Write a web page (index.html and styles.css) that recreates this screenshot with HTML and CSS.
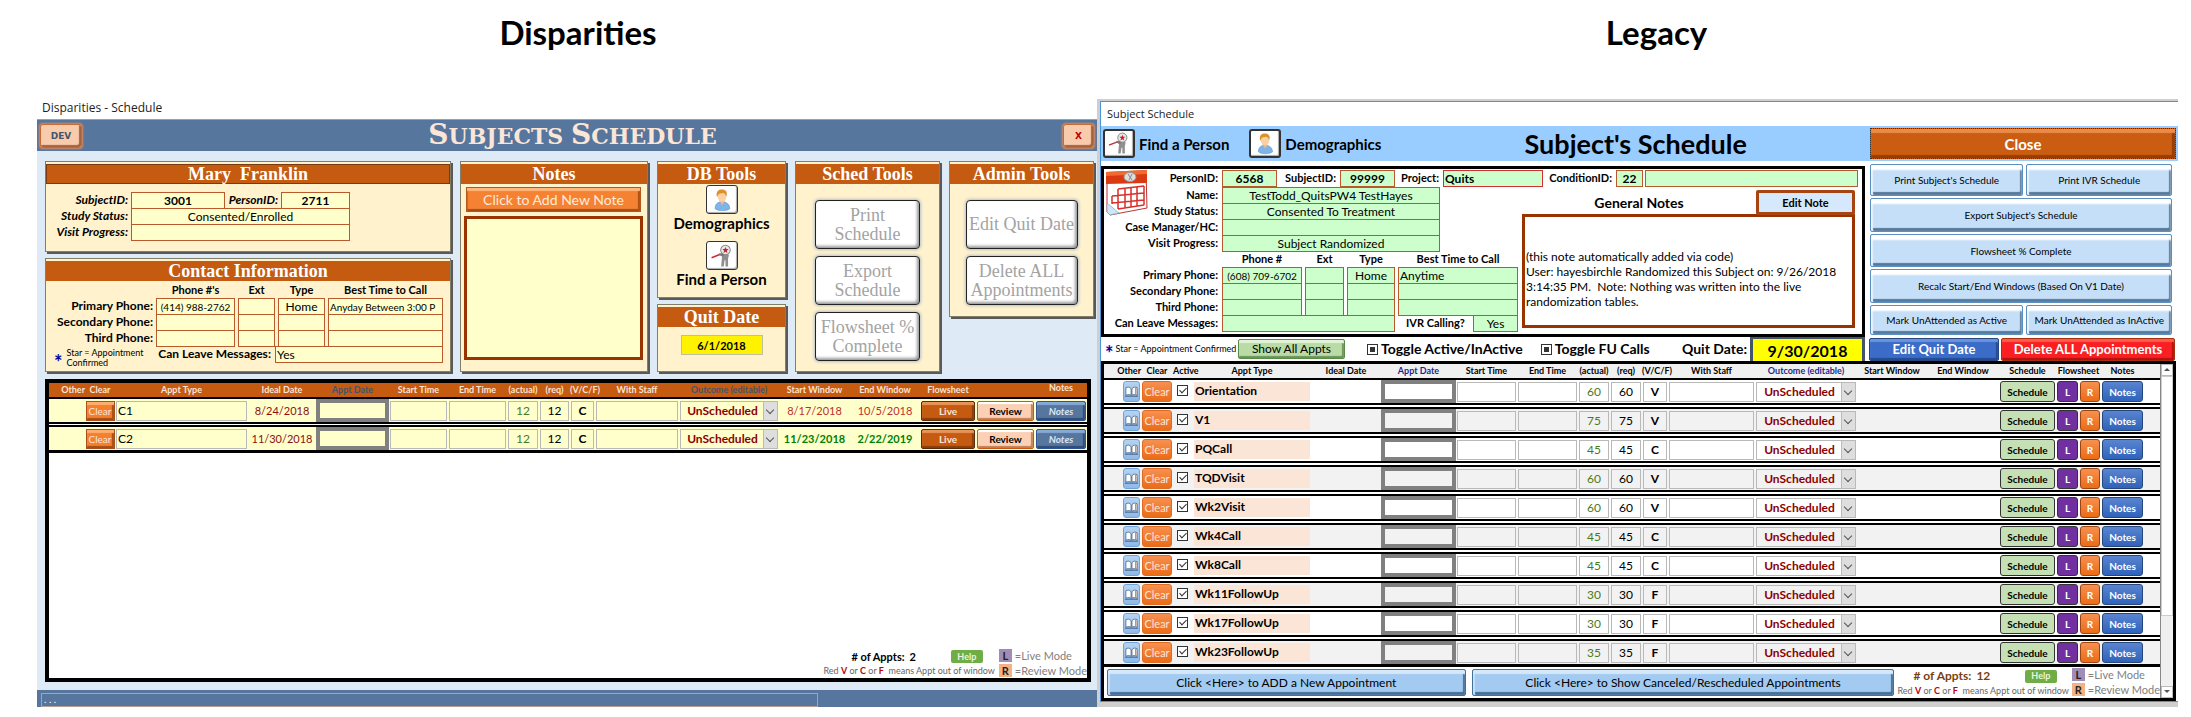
FILE: index.html
```html
<!DOCTYPE html>
<html lang="en">
<head>
<meta charset="utf-8">
<title>Subject schedule: Disparities and Legacy</title>
<link rel="stylesheet" href="styles.css">
</head>
<body>
<svg class="defs" aria-hidden="true">
  <symbol id="person" viewBox="0 0 30 30">
    <path d="M7 25c0-5 3-8 8-8s9 3 9 8c-3 3-14 3-17 0z" fill="#7db4ea" stroke="#4a86c5" stroke-width=".6"/>
    <path d="M12 16l3 5 3-4v-3h-6z" fill="#f0b98a"/>
    <ellipse cx="15" cy="11" rx="5" ry="6" fill="#fbd0a6"/>
    <path d="M9 11c-1-6 2-8 6-8s7 3 5 8c-1-2-2-4-4-4-3 1-5 0-6 4z" fill="#d8942b"/>
  </symbol>
  <symbol id="finder" viewBox="0 0 30 30">
    <path d="M12 13l7-3 4 4-1 4v9h-3v-7h-1l-1 7h-3l1-11z" fill="#8f8f8f"/>
    <circle cx="19" cy="8" r="5.500" fill="#e8e8e8" stroke="#888" stroke-width="1.200"/>
    <path d="M19 4.500l1 2.500h2.500l-2 1.800.8 2.700-2.300-1.500-2.300 1.500.8-2.700-2-1.800H18z" fill="#c8202c"/>
    <path d="M3 17l10-4" stroke="#c0303a" stroke-width="1.800"/>
    <path d="M12 13l5 1" stroke="#777" stroke-width="2.500"/>
  </symbol>
  <symbol id="book" viewBox="0 0 16 16">
    <path d="M2 4c2-1 4-1 5.500 1v7C6 11 4 11 2 12zM14 4c-2-1-4-1-5.500 1v7c1.500-1 3.500-1 5.500 0z" fill="#fff" stroke="#3f5f85" stroke-width=".8"/>
    <path d="M12.500 4v7" stroke="#d07a3a" stroke-width="1.200"/><path d="M1 13h14" stroke="#3f5f85"/>
  </symbol>
  <symbol id="calendar" viewBox="0 0 42 46">
    <path d="M1 5L40 1l1 37L4 45l-3-3z" fill="#fff" stroke="#b33" stroke-width="1"/>
    <path d="M0 2L41 0v13L0 14z" fill="#d93a12"/>
    <path d="M0 2L41 0v4L0 6z" fill="#f06a32"/>
    <ellipse cx="24" cy="7" rx="6" ry="4.500" fill="#ddd" stroke="#999"/><path d="M22 4l4 6M26 4l-3 6" stroke="#888"/>
    <path d="M12 19l26-3M6 26l32-3M6 33l32-3M12 39l26-4M6 26v8M12 19v20M19 18v20M25 17v20M31 17v19M38 16v19" fill="none" stroke="#d8302a" stroke-width="1.500"/>
    <path d="M1 33l12 10-9 2-3-3z" fill="#cfe6f7" stroke="#7ab" stroke-width=".7"/>
  </symbol>
</svg>

<main class="page">
  <h1 class="heading">Disparities</h1>
  <h1 class="heading second-heading">Legacy</h1>

  <section class="disp">
    <div class="disp-caption">Disparities - Schedule</div>
    <header class="disp-bar">
      <button class="dev">DEV</button>
      <h2><span>Subjects</span> <span>Schedule</span></h2>
      <button class="dev exit">X</button>
    </header>

    <div class="disp-body">
      <div class="cards">
        <div class="stack">
          <section class="card">
            <h3 class="outlined">Mary&nbsp; Franklin</h3>
            <div class="subject-grid">
              <label for="d-subj">SubjectID:</label><input id="d-subj" class="strong" value="3001">
              <label for="d-pers">PersonID:</label><input id="d-pers" class="strong" value="2711">
              <label for="d-stat">Study Status:</label><input id="d-stat" class="wide" value="Consented/Enrolled">
              <label for="d-prog">Visit Progress:</label><input id="d-prog" class="wide">
            </div>
          </section>
          <section class="card grow">
            <h3>Contact Information</h3>
            <div class="phone-grid contact">
              <b></b><b>Phone #'s</b><b>Ext</b><b>Type</b><b>Best Time to Call</b>
              <label for="d-p1">Primary Phone:</label><input id="d-p1" class="phone" value="(414) 988-2762"><input aria-label="Ext 1"><input aria-label="Type 1" value="Home"><input aria-label="Best time 1" class="left best" value="Anyday Between 3:00 P">
              <label for="d-p2">Secondary Phone:</label><input id="d-p2"><input aria-label="Ext 2"><input aria-label="Type 2"><input aria-label="Best time 2">
              <label for="d-p3">Third Phone:</label><input id="d-p3"><input aria-label="Ext 3"><input aria-label="Type 3"><input aria-label="Best time 3">
              <p class="star-note"><span class="star">*</span><span>Star = Appointment Confirmed</span></p>
              <label class="messages" for="d-msg">Can Leave Messages:</label><input id="d-msg" class="left span-two" value="Yes">
            </div>
          </section>
        </div>

        <section class="card notes-card">
          <h3>Notes</h3>
          <button class="add-note">Click to Add New Note</button>
          <textarea class="note-box" aria-label="Notes"></textarea>
        </section>

        <div class="stack">
          <section class="card tools">
            <h3>DB Tools</h3>
            <button class="icon-btn" aria-label="Demographics"><svg><use href="#person"/></svg></button>
            <span class="tool-name">Demographics</span>
            <button class="icon-btn" aria-label="Find a Person"><svg><use href="#finder"/></svg></button>
            <span class="tool-name">Find a Person</span>
          </section>
          <section class="card grow quit-card">
            <h3>Quit Date</h3>
            <input aria-label="Quit Date" value="6/1/2018">
          </section>
        </div>

        <section class="card soft-tools">
          <h3>Sched Tools</h3>
          <button>Print Schedule</button>
          <button>Export Schedule</button>
          <button>Flowsheet % Complete</button>
        </section>

        <section class="card soft-tools admin">
          <h3>Admin Tools</h3>
          <button>Edit Quit Date</button>
          <button>Delete ALL Appointments</button>
        </section>
      </div>

      <div class="disp-list">
        <table class="appts warm">
          <colgroup>
            <col class="w36"><col class="w30"><col><col class="w68"><col class="w73"><col class="w59"><col class="w59"><col class="w32"><col class="w31"><col class="w25"><col class="w84"><col class="w100"><col class="w71"><col class="w70"><col class="w56"><col class="w59"><col class="w52">
          </colgroup>
          <thead><tr>
            <th class="end">Other</th><th>Clear</th><th>Appt Type</th><th>Ideal Date</th><th class="edit">Appt Date</th><th>Start Time</th><th>End Time</th><th>(actual)</th><th>(req)</th><th>(V/C/F)</th><th>With Staff</th><th class="edit">Outcome (editable)</th><th>Start Window</th><th>End Window</th><th>Flowsheet</th><th></th><th class="raised">Notes</th>
          </tr></thead>
          <tbody id="disp-rows"></tbody>
        </table>
        <footer class="disp-foot">
          <div class="counts">
            <p class="count"><span># of Appts:</span> <span>2</span><button class="help">Help</button></p>
            <p class="legend-text">Red <b>V</b> or <b>C</b> or <b>F</b>&nbsp; means Appt out of window</p>
          </div>
          <dl class="modes"><dt class="live">L</dt><dd>=Live Mode</dd><dt class="review">R</dt><dd>=Review Mode</dd></dl>
        </footer>
      </div>
    </div>
    <div class="status"><div class="status-field">. . .</div></div>
  </section>

  <section class="legacy-frame">
    <div class="legacy">
      <div class="legacy-caption">Subject Schedule</div>
      <header class="legacy-bar">
        <button class="icon-btn big" aria-label="Find a Person"><svg><use href="#finder"/></svg></button>
        <span class="bar-name">Find a Person</span>
        <button class="icon-btn big" aria-label="Demographics"><svg><use href="#person"/></svg></button>
        <span class="bar-name">Demographics</span>
        <h2>Subject's Schedule</h2>
        <button class="close">Close</button>
      </header>

      <div class="legacy-top">
        <section class="info">
          <svg class="calendar"><use href="#calendar"/></svg>
          <div class="ids">
            <label class="first" for="l-pers">PersonID:</label><input id="l-pers" class="strong id" value="6568">
            <label class="second" for="l-subj">SubjectID:</label><input id="l-subj" class="strong id" value="99999">
            <label class="third" for="l-proj">Project:</label><input id="l-proj" class="strong left project" value="Quits">
            <label class="fourth" for="l-cond">ConditionID:</label><input id="l-cond" class="strong cond" value="22">
            <input class="cond-name" aria-label="Condition name">
          </div>
          <div class="info-split">
            <div class="phone-grid green">
              <label for="l-name">Name:</label><input id="l-name" class="mid" value="TestTodd_QuitsPW4 TestHayes">
              <label for="l-stat">Study Status:</label><input id="l-stat" class="mid" value="Consented To Treatment">
              <label for="l-case">Case Manager/HC:</label><input id="l-case" class="mid">
              <label for="l-prog">Visit Progress:</label><input id="l-prog" class="mid" value="Subject Randomized">
              <b></b><b>Phone #</b><b>Ext</b><b>Type</b><b>Best Time to Call</b>
              <label for="l-p1">Primary Phone:</label><input id="l-p1" class="phone" value="(608) 709-6702"><input aria-label="Ext 1"><input aria-label="Type 1" value="Home"><input aria-label="Best time 1" class="left" value="Anytime">
              <label for="l-p2">Secondary Phone:</label><input id="l-p2"><input aria-label="Ext 2"><input aria-label="Type 2"><input aria-label="Best time 2">
              <label for="l-p3">Third Phone:</label><input id="l-p3"><input aria-label="Ext 3"><input aria-label="Type 3"><input aria-label="Best time 3">
              <label for="l-msg">Can Leave Messages:</label><input id="l-msg" class="span-three">
              <span class="ivr"><label for="l-ivr">IVR Calling?</label><input id="l-ivr" value="Yes"></span>
            </div>
            <div class="general">
              <div class="general-head"><label for="l-notes">General Notes</label><button class="edit-note">Edit Note</button></div>
              <textarea id="l-notes">(this note automatically added via code)
User: hayesbirchle Randomized this Subject on: 9/26/2018 3:14:35 PM.  Note: Nothing was written into the live randomization tables.</textarea>
            </div>
          </div>
        </section>
        <div class="actions">
          <button>Print Subject's Schedule</button><button>Print IVR Schedule</button>
          <button class="full">Export Subject's Schedule</button>
          <button class="full">Flowsheet % Complete</button>
          <button class="full">Recalc Start/End Windows (Based On V1 Date)</button>
          <button>Mark UnAttended as Active</button><button>Mark UnAttended as InActive</button>
        </div>
      </div>

      <div class="toolbar">
        <p class="star-note"><span class="star">*</span><span>Star = Appointment Confirmed</span></p>
        <button class="show-all">Show All Appts</button>
        <label class="toggle active-toggle"><input type="checkbox" checked>Toggle Active/InActive</label>
        <label class="toggle"><input type="checkbox" checked>Toggle FU Calls</label>
        <label class="quit-label" for="l-quit">Quit Date:</label>
        <input id="l-quit" class="quit" value="9/30/2018">
        <button class="edit-quit">Edit Quit Date</button>
        <button class="delete-all">Delete ALL Appointments</button>
      </div>

      <div class="legacy-list">
        <div class="list-main">
          <table class="appts cool">
            <colgroup>
              <col class="w37"><col class="w32"><col class="w20"><col><col class="w70"><col class="w75"><col class="w61"><col class="w61"><col class="w32"><col class="w32"><col class="w26"><col class="w87"><col class="w102"><col class="w70"><col class="w72"><col class="w57"><col class="w23"><col class="w22"><col class="w43"><col class="w16">
            </colgroup>
            <thead><tr>
              <th class="end">Other</th><th>Clear</th><th class="start">Active</th><th>Appt Type</th><th>Ideal Date</th><th class="edit">Appt Date</th><th>Start Time</th><th>End Time</th><th>(actual)</th><th>(req)</th><th>(V/C/F)</th><th>With Staff</th><th class="edit">Outcome (editable)</th><th>Start Window</th><th>End Window</th><th>Schedule</th><th colspan="2">Flowsheet</th><th>Notes</th><th></th>
            </tr></thead>
            <tbody id="legacy-rows"></tbody>
          </table>
          <footer class="legacy-foot">
            <button class="add">Click &lt;Here&gt; to ADD a New Appointment</button>
            <button class="canceled">Click &lt;Here&gt; to Show Canceled/Rescheduled Appointments</button>
            <div class="counts">
              <p class="count brown"><span># of Appts:</span> <span>12</span><button class="help">Help</button></p>
              <p class="legend-text">Red <b>V</b> or <b>C</b> or <b>F</b>&nbsp; means Appt out of window</p>
            </div>
            <dl class="modes"><dt class="live">L</dt><dd>=Live Mode</dd><dt class="review">R</dt><dd>=Review Mode</dd></dl>
          </footer>
        </div>
        <div class="scroll"><i class="up"></i><span class="thumb"></span><i class="down"></i></div>
      </div>
    </div>
  </section>
</main>
<script src="rows.js"></script>
</body>
</html>
```

FILE: rows.js
```javascript
const box = (label, cls = "", value = "") =>
  `<td><input class="cell ${cls}" aria-label="${label}" value="${value}"></td>`;
const outcome = `<td><span class="pick"><select aria-label="Outcome"><option>UnScheduled</option></select></span></td>`;

const disparities = [
  ["C1", "8/24/2018", "8/17/2018", "10/5/2018", "due"],
  ["C2", "11/30/2018", "11/23/2018", "2/22/2019", "open"],
];
document.getElementById("disp-rows").innerHTML = disparities.map(([type, ideal, from, to, state]) => `<tr>
  <td></td><td><button class="clear">Clear</button></td>${box("Appt type", "left", type)}
  <td class="date ideal">${ideal}</td>${box("Appt date", "appt")}${box("Start time")}${box("End time")}
  ${box("Actual", "actual", 12)}${box("Required", "", 12)}${box("Kind", "strong", "C")}${box("Staff")}${outcome}
  <td class="date ${state}">${from}</td><td class="date ${state}">${to}</td>
  <td><button class="glass live-btn">Live</button></td><td><button class="glass review-btn">Review</button></td>
  <td><button class="glass notes-btn">Notes</button></td></tr>`).join("");

const legacy = [
  ["Orientation", 60, "V"], ["V1", 75, "V"], ["PQCall", 45, "C"], ["TQDVisit", 60, "V"],
  ["Wk2Visit", 60, "V"], ["Wk4Call", 45, "C"], ["Wk8Call", 45, "C"], ["Wk11FollowUp", 30, "F"],
  ["Wk17FollowUp", 30, "F"], ["Wk23FollowUp", 35, "F"],
];
document.getElementById("legacy-rows").innerHTML = legacy.map(([type, mins, kind]) => `<tr>
  <td class="end"><button class="book" aria-label="Other"><svg><use href="#book"/></svg></button></td>
  <td><button class="clear">Clear</button></td>
  <td><input type="checkbox" class="tick" aria-label="Active" checked></td>
  <td class="type"><span>${type}</span></td><td></td>${box("Appt date", "appt")}${box("Start time")}${box("End time")}
  ${box("Actual", "actual", mins)}${box("Required", "", mins)}${box("Kind", "strong", kind)}${box("Staff")}${outcome}
  <td></td><td></td>
  <td><button class="flat sched">Schedule</button></td><td><button class="flat l">L</button></td>
  <td><button class="flat r">R</button></td><td><button class="flat n">Notes</button></td><td></td></tr>`).join("");
```

FILE: styles.css
```css
* { box-sizing: border-box; }
body { margin: 0; background: #fff; color: #000; font: 12px/16px Lato, "Open Sans", sans-serif; }
h1, h2, h3, p, dl, dd { margin: 0; }
button, input, select, textarea { font: inherit; color: inherit; margin: 0; padding: 0; border-radius: 0; }
button { cursor: pointer; white-space: nowrap; }
textarea { resize: none; display: block; }
.defs { position: absolute; width: 0; height: 0; }

.page { display: grid; grid-template-columns: 1060fr 1081fr; padding: 0 13px 0 37px; }
.heading { height: 99px; padding: 12px 0 0 22px; font-size: 33px; line-height: 40px; text-align: center; }
.second-heading { padding-left: 38px; }

/* Disparities window */
.disp { display: flex; flex-direction: column; background: #deebf7; }
.disp-caption { background: #fff; height: 20px; padding-left: 5px; font: 12px/18px "Open Sans", sans-serif; color: #222; }
.disp-bar { display: flex; align-items: center; height: 32px; padding: 0 3px; background: #56769e; border-top: 1px solid #8ba4c3; }
.disp-bar h2 { flex: 1; text-align: center; font: bold 22px/30px "DejaVu Serif", serif; text-transform: uppercase; color: #fbe5d6; }
.disp-bar h2 span { display: inline-block; }
.disp-bar h2 span::first-letter { font-size: 28px; }
.dev { width: 42px; height: 24px; border: 1px solid #c86b33; border-radius: 3px; background: #f8cbad; color: #44546a; font: bold 9px/14px "DejaVu Sans", sans-serif; box-shadow: inset -2px -2px 1px #a8623a, 0 0 2px 1px #d98a5c; }
.exit { width: 31px; color: #c00000; }
.disp-body { flex: 1; display: flex; flex-direction: column; padding: 10px 1px 8px 8px; }
.cards { display: grid; grid-template-columns: 408fr 190fr 131fr 147fr 147fr; gap: 7px; margin-bottom: 7px; }
.stack { display: flex; flex-direction: column; gap: 6px; }
.card { background: #fff2cc; border: 1px solid #7f7f6a; box-shadow: 2px 2px 0 #595959; padding-top: 2px; margin-right: 2px; }
.grow { flex: 1; }
.card h3 { height: 20px; background: #c55a11; color: #fff; text-align: center; font: bold 18px/20px "Liberation Serif", serif; }
.card .outlined { border: 1px solid #7a3a10; line-height: 18px; }

input { min-width: 0; text-align: center; }
.subject-grid input, .phone-grid input, .ids input { height: 17px; border: 1px solid #b85a2b; background: #ffffcc; }
label { font-weight: bold; text-align: right; }
.strong { font-weight: bold; }
.left { text-align: left !important; padding-left: 1px; }
.phone-grid .phone, .phone-grid .best { font-size: 10px; }
.subject-grid { display: grid; grid-template-columns: 85px 94px 56px 69px; grid-auto-rows: 16px; padding: 8px 0 11px; }
.subject-grid label { font-style: italic; padding-right: 3px; }
.wide { grid-column: span 3; }
.phone-grid { display: grid; grid-template-columns: 107px 79px 37px 47px 1fr; column-gap: 3px; grid-auto-rows: 16px; }
.contact { grid-template-rows: repeat(5, 16px) 9px; padding: 1px 7px 0 0; }
.phone-grid b { text-align: center; white-space: nowrap; font-size: 11px; }
.phone-grid label { white-space: nowrap; }
.messages { grid-column: span 2; padding-right: 4px; }
.span-two { grid-column: span 2; margin-left: -3px; }
.star-note { display: flex; align-items: center; gap: 4px; font-size: 9px; line-height: 10px; }
.star { color: #000099; font-size: 20px; font-weight: bold; line-height: 10px; padding-top: 8px; }
.phone-grid .star-note { grid-row: 5 / span 2; grid-column: 1; padding-left: 8px; height: 24px; }

.notes-card { display: flex; flex-direction: column; }
.add-note { height: 25px; margin: 3px 6px 4px 5px; border: 1px solid #b5561a; background: #f58233; color: #fdeada; font-size: 14px; box-shadow: inset 0 3px 1px #ffb679, inset -2px -2px 1px #a64d13, inset 1px 0 1px #c4601f; }
.note-box { flex: 1; margin: 0 4px 11px 3px; border: 3px solid #993300; background: #ffffcc; }
.tools { display: flex; flex-direction: column; align-items: center; height: 137px; }
.tools h3, .quit-card h3 { align-self: stretch; }
.icon-btn { width: 32px; height: 29px; border: 1px solid #333; border-radius: 3px; background: #fff; box-shadow: inset -1px -1px 1px #aaa; display: block; }
.icon-btn svg { display: block; width: 100%; height: 26px; }
.icon-btn + .tool-name { margin-bottom: 7px; }
.tools .icon-btn { margin-top: 1px; flex: none; }
.tool-name { font-size: 15px; line-height: 19px; font-weight: bold; }
.quit-card { display: flex; flex-direction: column; align-items: center; }
.quit-card input { width: 82px; height: 20px; margin-top: 8px; border: 1px solid #bfbfa0; background: #fff200; font-size: 11px; font-weight: bold; }
.soft-tools { display: flex; flex-direction: column; align-items: center; gap: 7px; }
.soft-tools h3 { align-self: stretch; margin-bottom: 9px; }
.soft-tools button { width: 105px; height: 49px; border: 1px solid #222; border-radius: 4px; background: #fff; color: #a3a3a3; font: 18px/19px "Liberation Serif", serif; white-space: normal; box-shadow: inset -2px -2px 3px #999, 0 0 3px 1px #b4c0cc; }
.soft-tools.admin { align-self: start; padding-bottom: 11px; }
.soft-tools.admin button { width: 112px; }

.disp-list { flex: 1; display: flex; flex-direction: column; background: #fff; border: 4px solid #000; margin-right: 5px; }
.disp-foot { display: flex; justify-content: flex-end; gap: 4px; margin-top: auto; }
.status { height: 17px; background: #56769e; padding: 3px 279px 0 4px; }
.status-field { height: 14px; border: 1px solid #bb9d98; color: #fff; font-size: 10px; line-height: 10px; padding-left: 2px; }

/* Appointment tables */
.appts { width: 100%; table-layout: fixed; border-spacing: 0; }
.appts th, .appts td { padding: 0; text-align: center; white-space: nowrap; }
.appts th { height: 16px; font-size: 9px; line-height: 14px; border-bottom: 2px solid #000; }
.appts .end { text-align: right; }
.appts .start { text-align: left; }
.warm th { background: #c55a11; color: #fbe5d6; }
.warm .edit { color: #44546a; }
.warm .raised { vertical-align: top; line-height: 9px; }
.cool th { background: #f0f0f0; }
.cool .edit { color: #1f1f8f; }
.appts td { height: 28px; border-bottom: 5px double #000; background-clip: padding-box; }
.warm td { background-color: #ffffcc; font-size: 13px; }
.cool td { height: 29px; border-bottom-width: 6px; font-size: 12px; }
.cool tr:nth-child(even) td { background-color: #f2f2f2; }
.warm tr:last-child td, .cool tr:last-child td { border-bottom: 3px solid #000; height: 26px; }
.appts .date { font-size: 11px; }
.cell { display: block; width: calc(100% - 2px); height: 20px; margin: 0 auto; border: 1px solid #b9b9b9; background: transparent; font-size: 12px; }
.appt { width: 100%; height: 23px; border: 4px solid #808080; }
.actual { color: #4a7a1e; }
.ideal { color: #8b1010; }
.due { color: #c0302b; }
.open { color: #008000; font-weight: bold; }
.pick { position: relative; display: block; height: 20px; margin: 0 1px; border: 1px solid #b9b9b9; }
.pick::before { content: ""; position: absolute; inset: 0 0 0 auto; width: 13px; background: #dedede; border-left: 1px solid #bbb; }
.pick::after { content: ""; position: absolute; right: 4px; top: 5px; width: 5px; height: 5px; border: solid #555; border-width: 0 1px 1px 0; transform: rotate(45deg); pointer-events: none; }
.pick select { position: relative; display: block; width: 100%; height: 18px; border: 0; padding-right: 13px; appearance: none; background: transparent; color: #8b0000; font-size: 12px; font-weight: bold; text-align-last: center; }
.clear { display: block; width: 29px; height: 20px; margin: 0 auto; border: 1px solid #a8501a; background: #f47f2e; color: #fbe5d6; font-size: 10px; line-height: 14px; box-shadow: inset 0 3px 1px #ffae6e, inset -2px -2px 1px #a64d13; }
.cool .clear { width: 30px; height: 21px; border-color: #e06a1e; border-radius: 3px; background: linear-gradient(#f79050, #ea6c17); box-shadow: none; font-size: 11px; }
.glass { display: block; width: calc(100% - 2px); height: 20px; margin: 0 auto; border: 1px solid #5c2d0c; border-radius: 2px; font-size: 10px; line-height: 14px; font-weight: bold; }
.live-btn { background: #c55a11; color: #fbe5d6; box-shadow: inset 0 3px 1px #e8935a, inset -2px -2px 1px #8a3d0a; }
.review-btn { background: #fbd0b5; border-color: #c55a11; box-shadow: inset 0 2px 1px #fff, inset -2px -2px 1px #c47d52; }
.notes-btn { background: #56769e; border-color: #2f5597; color: #dce6f2; font-style: italic; box-shadow: inset 0 3px 1px #86a9d8, inset -2px -2px 1px #2f4d78; }
.book { width: 17px; height: 21px; border: 1px solid #6fa3dc; border-radius: 3px; background: linear-gradient(#b5d3f1, #8fb9e6); margin-right: 1px; vertical-align: middle; }
.book svg { display: block; width: 100%; height: 15px; }
.tick { position: relative; display: block; width: 11px; height: 11px; margin: 0 0 3px 4px; appearance: none; border: 1px solid #333; background: #fff; }
.tick:checked::after { content: ""; position: absolute; left: 3px; top: 0; width: 3px; height: 6px; border: solid #333; border-width: 0 1px 1px 0; transform: rotate(45deg); }
.appts .type { text-align: left; }
.type span { display: block; height: 19px; margin: 0 1px; padding-left: 1px; background: #fbe5d6; font-weight: bold; line-height: 18px; }
.flat { display: block; width: calc(100% - 2px); height: 21px; margin: 0 auto; border: 1px solid #333; border-radius: 3px; font-size: 10px; line-height: 14px; font-weight: bold; color: #fff; }
.sched { background: #c5e0b4; color: #000; }
.l { background: #7030a0; }
.r { background: linear-gradient(#f79050, #ea6c17); border-color: #9c4510; }
.n { background: linear-gradient(#5a84d0, #2f63ba); border-color: #24487e; }

.w16 { width: 16px; } .w20 { width: 20px; } .w22 { width: 22px; } .w23 { width: 23px; } .w25 { width: 25px; }
.w26 { width: 26px; } .w30 { width: 30px; } .w31 { width: 31px; } .w32 { width: 32px; } .w36 { width: 36px; }
.w37 { width: 37px; } .w43 { width: 43px; } .w52 { width: 52px; } .w56 { width: 56px; } .w57 { width: 57px; }
.w59 { width: 59px; } .w61 { width: 61px; } .w68 { width: 68px; } .w70 { width: 70px; } .w71 { width: 71px; }
.w72 { width: 72px; } .w73 { width: 73px; } .w75 { width: 75px; } .w84 { width: 84px; } .w87 { width: 87px; }
.w100 { width: 100px; } .w102 { width: 102px; }

/* Counters and legend */
.count { display: flex; align-items: center; height: 15px; padding-left: 28px; gap: 5px; font-size: 11px; font-weight: bold; }
.brown { font-size: 12px; padding-left: 16px; color: #7a3f10; }
.help { width: 32px; height: 13px; margin: 0 12px 0 auto; border: 0; border-radius: 2px; background: #70ad47; color: #e8f5dc; font-size: 9px; line-height: 12px; }
.legend-text { font-size: 9px; line-height: 13px; color: #666; white-space: nowrap; }
.legend-text b { color: #c00000; }
.modes { display: grid; grid-template-columns: 13px auto; gap: 1px 3px; font-size: 11px; line-height: 14px; color: #7f7f7f; white-space: nowrap; }
.modes dt { font-weight: bold; text-align: center; color: #222; height: 13px; line-height: 13px; }
.live { background: #a08cb4; }
.review { background: #f4b183; }

/* Legacy window */
.legacy-frame { background: #cfcfcf; padding: 2px 0 5px 3px; }
.legacy { display: flex; flex-direction: column; height: 100%; background: #fff; border: solid #4a94d8; border-width: 1px 0 1px 1px; }
.legacy-caption { height: 24px; padding-left: 6px; font: 11px/24px "Open Sans", sans-serif; color: #222; }
.legacy-bar { display: flex; align-items: center; height: 35px; padding: 0 2px; background: #99ccff; }
.icon-btn.big { flex: none; border-width: 2px; }
.icon-btn.big svg { height: 25px; }
.bar-name { font-size: 15px; line-height: 20px; font-weight: bold; padding: 0 20px 0 4px; white-space: nowrap; }
.legacy-bar h2 { flex: 1; text-align: center; font-size: 27px; line-height: 30px; }
.close { width: 306px; height: 31px; border: 1px dotted #333; background: #cb5d12; color: #fff; font-size: 15px; font-weight: bold; box-shadow: inset 0 4px 1px #e98b4b, inset -3px -3px 1px #943f08; }
.legacy-top { display: grid; grid-template-columns: 1fr 302px; gap: 5px; padding: 3px 6px 0 0; }
.info { position: relative; border: 3px solid #000; margin-top: 2px; padding: 1px 4px 0 0; }
.calendar { position: absolute; left: 2px; top: 1px; width: 42px; height: 46px; }
.ids { display: flex; }
.ids input, .green input { background: #ccffcc; }
.ids label { padding-right: 4px; white-space: nowrap; font-size: 11px; }
.first { width: 118px; }
.id { width: 55px; }
.second { width: 63px; }
.third { width: 48px; }
.fourth { width: 73px; }
.ids .project { width: 100px; border-color: #d03030; }
.cond { width: 27px; }
.cond-name { flex: 1; margin-left: 2px; }
.info-split { display: grid; grid-template-columns: 414px 1fr; gap: 4px; }
.green { grid-template-columns: 115px 80px 39px 48px 1fr; }
.green label { padding-right: 1px; font-size: 11px; }
.mid { grid-column: span 4; width: 218px; }
.span-three { grid-column: span 3; }
.ivr { display: flex; justify-content: space-between; padding-left: 8px; }
.ivr input { width: 45px; }
.general { display: flex; flex-direction: column; padding: 4px 3px 6px 0; }
.general-head { display: flex; align-items: center; height: 23px; position: relative; }
.general-head label { flex: 1; text-align: center; font-size: 14px; }
.edit-note { width: 99px; height: 25px; border: 3px solid #a84312; border-radius: 2px; background: #d6e8fb; font-weight: bold; font-size: 11px; line-height: 14px; }
.general textarea { flex: 1; min-height: 114px; border: 3px solid #993300; padding: 32px 1px 0; line-height: 15px; font-size: 12px; overflow: hidden; }
.actions { display: grid; grid-template-columns: 154fr 146fr; grid-template-rows: 32px 34px 33px 34px 30px; gap: 2px 3px; }
.actions button { border: 1px solid #5b8fc0; border-radius: 2px; background: #c5dff8; font-size: 10px; box-shadow: inset 0 5px 2px #fff, inset 2px 0 1px #e6f1fc, inset -2px -3px 1px #56789a; }
.full { grid-column: span 2; }
.toolbar { display: flex; align-items: center; height: 24px; padding-right: 3px; white-space: nowrap; }
.toolbar .star-note { width: 137px; padding-left: 4px; gap: 2px; }
.show-all { width: 107px; height: 20px; border: 1px solid #5a8a48; border-radius: 2px; background: #b9dba6; font-size: 12px; box-shadow: inset 0 3px 1px #e2f3d8, inset -2px -2px 1px #6c9459; }
.toggle { display: flex; align-items: center; gap: 3px; margin-left: 18px; font-size: 14px; }
.active-toggle { margin-left: 22px; }
.toggle input { width: 11px; height: 11px; appearance: none; border: 1px solid #333; background: #fff; }
.toggle input:checked { background: #333; box-shadow: inset 0 0 0 2px #fff; }
.quit-label { margin-left: auto; padding-right: 3px; font-size: 14px; }
.quit { width: 115px; height: 24px; border: 3px solid #44546a; border-width: 2px 3px 0; background: #ffff00; font-size: 16px; line-height: 20px; font-weight: bold; }
.edit-quit, .delete-all { width: 130px; height: 23px; margin-left: 4px; border: 1px solid #24487e; border-radius: 2px; background: #3a6cc8; color: #fff; font-size: 13px; font-weight: bold; box-shadow: inset 0 3px 1px #6b94e0, inset -2px -2px 1px #254b94; }
.delete-all { width: 174px; margin-left: 2px; border-color: #a83010; background: #f91f22; box-shadow: inset 0 3px 1px #ff5a4a, inset -2px -2px 1px #b31010; }
.legacy-list { flex: 1; display: flex; border: 3px solid #000; margin-right: 2px; }
.list-main { flex: 1; display: flex; flex-direction: column; border-right: 1px solid #888; min-width: 0; }
.legacy-foot { flex: 1; display: flex; align-items: center; gap: 3px; padding: 1px 0 1px 3px; }
.add, .canceled { flex: 356 1 0; min-width: 0; height: 27px; border: 1px solid #41719c; border-radius: 2px; background: #a3caf0; font-size: 12px; box-shadow: inset 0 4px 1px #d4e8fb, inset 2px 0 1px #c6e0f8, inset -2px -3px 1px #466f98; }
.add { margin-right: 3px; }
.canceled { flex-grow: 420; }
.scroll { width: 12px; display: flex; flex-direction: column; background: #f0f0f0; }
.scroll i { height: 12px; border: 1px solid #bbb; background: #fff; }
.scroll i::after { content: ""; display: block; margin: 3px 2px; border: 3px solid transparent; border-top-width: 0; border-bottom-color: #555; }
.scroll .down::after { border-top: 3px solid #555; border-bottom: 0 solid transparent; }
.thumb { flex: 1; margin-bottom: 70px; background: #fff; border: 1px solid #ccc; }
```
